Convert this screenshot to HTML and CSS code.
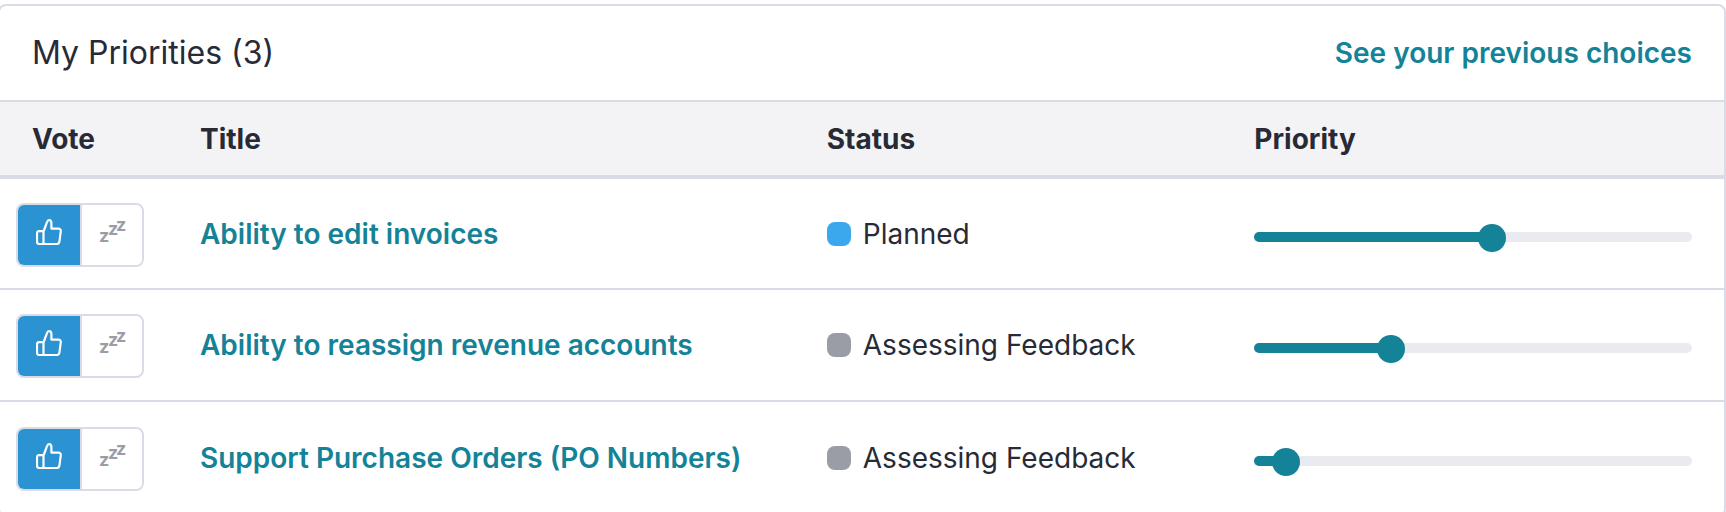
FILE: index.html
```html
<!DOCTYPE html>
<html lang="en">
<head>
    <meta charset="utf-8">
    <title>My Priorities</title>
    <link rel="stylesheet" href="styles.css">
</head>
<body>
    <!-- shared icons -->
    <svg class="icon-defs" aria-hidden="true">
        <symbol id="thumb-up" viewBox="0 0 26 26">
            <path d="M7.5 12.5 L11 3.2 C11.4 2 12 1.2 13 1.2 C14.6 1.2 15.4 2.4 15.4 4 V9.6 H22.5 C24 9.6 25 10.8 24.8 12.2 L23.4 22.6 C23.2 24 22.2 25 20.8 25 H3.2 C2 25 1 24 1 22.8 V14.4 C1 13.2 2 12.2 3.2 12.2 H7.5 V25"/>
        </symbol>
    </svg>

    <div class="card">
        <div class="card-header">
            <h2>My Priorities (3)</h2>
            <a href="#">See your previous choices</a>
        </div>
        <table class="priorities">
            <thead>
                <tr>
                    <th class="col-vote">Vote</th>
                    <th class="col-title">Title</th>
                    <th class="col-status">Status</th>
                    <th class="col-priority">Priority</th>
                </tr>
            </thead>
            <tbody>
                <tr>
                    <td class="vote">
                        <div class="vote-group">
                            <button type="button" class="active" aria-label="Vote up" aria-pressed="true"><svg class="thumb"><use href="#thumb-up"/></svg></button>
                            <button type="button" aria-label="Snooze" aria-pressed="false"><svg class="zzz"><text x="1" y="29">z</text><text x="10" y="22">z</text><text x="18" y="18">z</text></svg></button>
                        </div>
                    </td>
                    <td><a href="#">Ability to edit invoices</a></td>
                    <td><div class="status"><span class="dot planned"></span>Planned</div></td>
                    <td class="priority"><input type="range" min="0" max="1000" value="546" style="--fill: 54.6%" aria-label="Priority of Ability to edit invoices"></td>
                </tr>
                <tr>
                    <td class="vote">
                        <div class="vote-group">
                            <button type="button" class="active" aria-label="Vote up" aria-pressed="true"><svg class="thumb"><use href="#thumb-up"/></svg></button>
                            <button type="button" aria-label="Snooze" aria-pressed="false"><svg class="zzz"><text x="1" y="29">z</text><text x="10" y="22">z</text><text x="18" y="18">z</text></svg></button>
                        </div>
                    </td>
                    <td><a href="#">Ability to reassign revenue accounts</a></td>
                    <td><div class="status"><span class="dot"></span>Assessing Feedback</div></td>
                    <td class="priority"><input type="range" min="0" max="1000" value="300" style="--fill: 30%" aria-label="Priority of Ability to reassign revenue accounts"></td>
                </tr>
                <tr>
                    <td class="vote">
                        <div class="vote-group">
                            <button type="button" class="active" aria-label="Vote up" aria-pressed="true"><svg class="thumb"><use href="#thumb-up"/></svg></button>
                            <button type="button" aria-label="Snooze" aria-pressed="false"><svg class="zzz"><text x="1" y="29">z</text><text x="10" y="22">z</text><text x="18" y="18">z</text></svg></button>
                        </div>
                    </td>
                    <td><a href="#">Support Purchase Orders (PO Numbers)</a></td>
                    <td><div class="status"><span class="dot"></span>Assessing Feedback</div></td>
                    <td class="priority"><input type="range" min="0" max="1000" value="44" style="--fill: 4.4%" aria-label="Priority of Support Purchase Orders"></td>
                </tr>
            </tbody>
        </table>
    </div>
    <script>
        // keep the coloured part of the track in step with the thumb
        document.querySelectorAll('input[type=range]').forEach(function(range) {
            range.addEventListener('input', function() {
                range.style.setProperty('--fill', range.value / 10 + '%');
            });
        });
    </script>
</body>
</html>
```
FILE: styles.css
```css
* {
    box-sizing: border-box;
}
/* the page scrolls inside the window */
html {
    height: 100%;
    overflow: hidden;
}
body {
    height: 100%;
    margin: 0;
    padding-top: 4px;
    overflow-y: auto;
    scrollbar-width: none;
    background: #fff;
    color: #282a36;
    font-family: Inter, sans-serif;
    font-size: 28px;
    line-height: 36px;
}
a {
    color: #148297;
    font-weight: 600;
    text-decoration: none;
}
.icon-defs {
    display: none;
}

/* card */
.card {
    margin-left: -2px;
    padding-bottom: 2px;
    border: 2px solid #d9dbe6;
    border-radius: 8px;
    overflow: hidden;
}
.card-header {
    display: flex;
    justify-content: space-between;
    align-items: center;
    padding: 26px 32px;
    border-bottom: 2px solid #d9dbe6;
}
.card-header h2 {
    margin: 0;
    font-size: 32px;
    font-weight: 400;
    line-height: 42px;
}

/* table */
.priorities {
    width: 100%;
    table-layout: fixed;
    border-collapse: collapse;
}
.priorities th {
    height: 75px;
    padding: 0 32px;
    background: #f3f3f6;
    border-bottom: 4px solid #d9dbe6;
    font-weight: 700;
    text-align: left;
}
.priorities td {
    height: 112px;
    padding: 0 32px;
}
.priorities tbody tr + tr td {
    border-top: 2px solid #d9dbe6;
}
.col-vote {
    width: 168px;
}
.col-status {
    width: 24.8%;
}
.col-priority {
    width: 29.1%;
}

/* vote buttons */
.priorities .vote {
    padding: 2px 0 0 16px;
}
.vote-group {
    display: flex;
    width: 128px;
    height: 64px;
    border: 2px solid #d9dbe6;
    border-radius: 8px;
    overflow: hidden;
}
.vote-group button {
    width: 50%;
    display: flex;
    justify-content: center;
    align-items: center;
    padding: 0 0 6px;
    border: 0;
    background: #fff;
    cursor: pointer;
}
.vote-group button + button {
    border-left: 2px solid #d9dbe6;
}
.vote-group .active {
    background: #2b93d1;
}
.thumb {
    width: 26px;
    height: 26px;
    fill: none;
    stroke: #fff;
    stroke-width: 2.2;
    stroke-linejoin: round;
}
.zzz {
    width: 28px;
    height: 38px;
    fill: #9b9ca6;
    font-family: Inter, sans-serif;
    font-size: 18px;
    font-weight: 700;
    line-height: 20px;
}

/* status */
.status {
    display: flex;
    align-items: center;
    gap: 12px;
    white-space: nowrap;
}
.dot {
    width: 24px;
    height: 24px;
    border-radius: 8px;
    background: #9a9ca6;
}
.planned {
    background: #3ba7ed;
}

/* priority slider */
.priorities .priority {
    padding-top: 6px;
}
input[type=range] {
    -webkit-appearance: none;
    appearance: none;
    display: block;
    width: 100%;
    height: 10px;
    margin: 0;
    background: none;
}
input[type=range]::-webkit-slider-runnable-track {
    height: 10px;
    border-radius: 5px;
    background: linear-gradient(to right, #148297 var(--fill), #eaebf0 var(--fill));
}
input[type=range]::-webkit-slider-thumb {
    -webkit-appearance: none;
    width: 28px;
    height: 28px;
    margin-top: -8px;
    border-radius: 50%;
    background: #148297;
}
```
